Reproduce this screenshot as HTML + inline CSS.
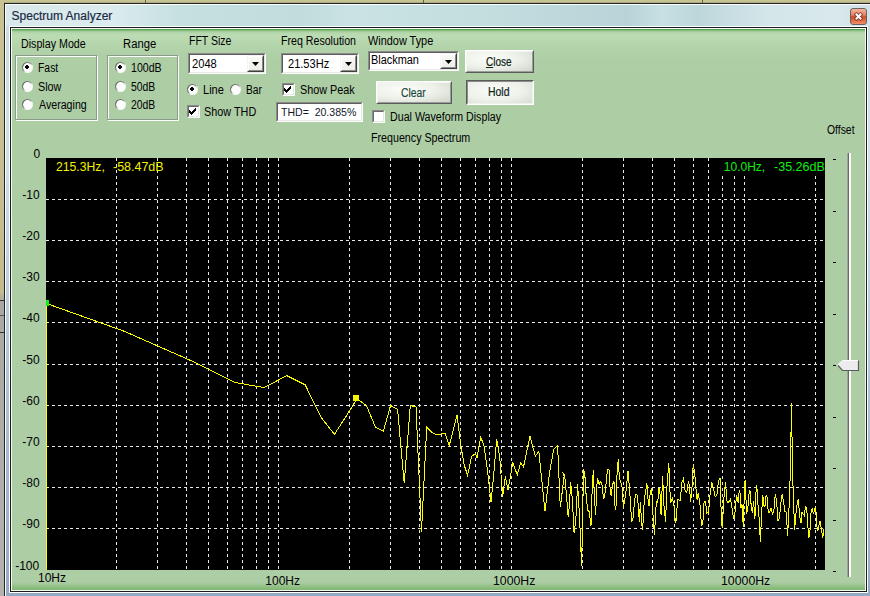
<!DOCTYPE html>
<html><head><meta charset="utf-8"><style>
html,body{margin:0;padding:0;}
body{width:870px;height:596px;overflow:hidden;position:relative;background:#c3bd92;font-family:"Liberation Sans",sans-serif;}
.t{position:absolute;white-space:pre;font-family:"Liberation Sans",sans-serif;font-size:12px;line-height:12px;}
</style></head><body>
<div style="position:absolute;left:0;top:0;width:870px;height:3px;background:linear-gradient(#c6c896,#c2c08e 60%,#a49e80)"></div>
<div style="position:absolute;left:0;top:0;width:4px;height:596px;background:linear-gradient(#c8c294,#c2bb8e 49%,#aaa8a6 50.5%,#b4b2ae 100%)"></div>
<div style="position:absolute;left:423px;top:0px;width:1px;height:3px;background:#5a6a40"></div>
<div style="position:absolute;left:145px;top:0px;width:1px;height:3px;background:#6a6a50"></div>
<div style="position:absolute;left:702px;top:0px;width:1px;height:3px;background:#6a6a50"></div>
<div style="position:absolute;left:0px;top:300px;width:4px;height:1px;background:#333"></div>
<div style="position:absolute;left:0px;top:315px;width:4px;height:1px;background:#555"></div>
<div style="position:absolute;left:0px;top:332px;width:4px;height:1px;background:#333"></div>
<div style="position:absolute;left:4px;top:3px;width:866px;height:593px;background:#262420"></div>
<div style="position:absolute;left:5px;top:4px;width:865px;height:592px;background:#fbfdfd"></div>
<div style="position:absolute;left:6px;top:5px;width:864px;height:591px;background:linear-gradient(#d2e4e8 0px,#c8dfe2 20px,#cfe0ea 150px,#b0c8dc 350px,#92aac4 591px)"></div>
<div style="position:absolute;left:6px;top:5px;width:864px;height:21px;background:linear-gradient(90deg,#d8e8ea 0%,#dcecee 12%,#c6e0e0 20%,#c0dcdc 34%,#cae2e4 40%,#c2dede 55%,#b8d4d8 72%,#c8e0e2 76%,#bcd6da 80%,#d4e6ea 88%,#d8e8ec 96%,#d0e2e6 100%)"></div>
<div style="position:absolute;left:850px;top:8px;width:17px;height:17px;box-sizing:border-box;border:1px solid #6c6060;border-radius:3px;background:linear-gradient(#f4b8a0,#e88060 40%,#d04a28 52%,#e06a40 75%,#f09070)"></div>
<svg style="position:absolute;left:850px;top:8px" width="17" height="17"><path d="M6.5,6.5 L10.5,10.5 M10.5,6.5 L6.5,10.5" stroke="#5a2a20" stroke-width="3.6" stroke-linecap="square" opacity="0.8"/><path d="M6.5,6.5 L10.5,10.5 M10.5,6.5 L6.5,10.5" stroke="#fff" stroke-width="2" stroke-linecap="square"/></svg>
<div style="position:absolute;left:9px;top:26px;width:859px;height:567px;background:#fdfefd"></div>
<div style="position:absolute;left:10px;top:27px;width:857px;height:565px;background:#1c1a1c"></div>
<div style="position:absolute;left:11px;top:28px;width:855px;height:563px;background:#f4faf2"></div>
<div style="position:absolute;left:12px;top:29px;width:853px;height:561px;background:linear-gradient(#3c9a3c 0px,#72b06a 1px,#9cc894 2px,#b6d8ae 4px,#bcdcb4 7px,#b4d4ac 16px,#aecfa6 30px,#adcda5 60px,#adcda5 553px,#a4c99a 555px,#94c288 557px,#86ba78 560px,#7eb470 561px)"></div>
<div style="position:absolute;left:16px;top:56px;width:82px;height:65px;border:1px solid #fbfdfb;box-sizing:border-box"></div>
<div style="position:absolute;left:15px;top:55px;width:82px;height:65px;border:1px solid #8e9a8c;box-sizing:border-box"></div>
<div style="position:absolute;left:108px;top:56px;width:71px;height:65px;border:1px solid #fbfdfb;box-sizing:border-box"></div>
<div style="position:absolute;left:107px;top:55px;width:71px;height:65px;border:1px solid #8e9a8c;box-sizing:border-box"></div>
<svg style="position:absolute;left:22px;top:62px" width="11" height="11" viewBox="0 0 11 11"><defs><linearGradient id="rg1" x1="0" y1="0" x2="1" y2="1"><stop offset="0" stop-color="#505050"/><stop offset="0.45" stop-color="#8a8a8a"/><stop offset="0.6" stop-color="#f4f6f2"/><stop offset="1" stop-color="#ffffff"/></linearGradient></defs><circle cx="5.5" cy="5.5" r="5.5" fill="url(#rg1)"/><circle cx="5.5" cy="5.5" r="4.4" fill="#fdfdfd"/><rect x="3" y="4" width="4" height="2" fill="#000" shape-rendering="crispEdges"/><rect x="4" y="3" width="2" height="4" fill="#000" shape-rendering="crispEdges"/></svg>
<svg style="position:absolute;left:22px;top:81px" width="11" height="11" viewBox="0 0 11 11"><defs><linearGradient id="rg2" x1="0" y1="0" x2="1" y2="1"><stop offset="0" stop-color="#505050"/><stop offset="0.45" stop-color="#8a8a8a"/><stop offset="0.6" stop-color="#f4f6f2"/><stop offset="1" stop-color="#ffffff"/></linearGradient></defs><circle cx="5.5" cy="5.5" r="5.5" fill="url(#rg2)"/><circle cx="5.5" cy="5.5" r="4.4" fill="#fdfdfd"/></svg>
<svg style="position:absolute;left:22px;top:99px" width="11" height="11" viewBox="0 0 11 11"><defs><linearGradient id="rg3" x1="0" y1="0" x2="1" y2="1"><stop offset="0" stop-color="#505050"/><stop offset="0.45" stop-color="#8a8a8a"/><stop offset="0.6" stop-color="#f4f6f2"/><stop offset="1" stop-color="#ffffff"/></linearGradient></defs><circle cx="5.5" cy="5.5" r="5.5" fill="url(#rg3)"/><circle cx="5.5" cy="5.5" r="4.4" fill="#fdfdfd"/></svg>
<svg style="position:absolute;left:115px;top:62px" width="11" height="11" viewBox="0 0 11 11"><defs><linearGradient id="rg4" x1="0" y1="0" x2="1" y2="1"><stop offset="0" stop-color="#505050"/><stop offset="0.45" stop-color="#8a8a8a"/><stop offset="0.6" stop-color="#f4f6f2"/><stop offset="1" stop-color="#ffffff"/></linearGradient></defs><circle cx="5.5" cy="5.5" r="5.5" fill="url(#rg4)"/><circle cx="5.5" cy="5.5" r="4.4" fill="#fdfdfd"/><rect x="3" y="4" width="4" height="2" fill="#000" shape-rendering="crispEdges"/><rect x="4" y="3" width="2" height="4" fill="#000" shape-rendering="crispEdges"/></svg>
<svg style="position:absolute;left:115px;top:81px" width="11" height="11" viewBox="0 0 11 11"><defs><linearGradient id="rg5" x1="0" y1="0" x2="1" y2="1"><stop offset="0" stop-color="#505050"/><stop offset="0.45" stop-color="#8a8a8a"/><stop offset="0.6" stop-color="#f4f6f2"/><stop offset="1" stop-color="#ffffff"/></linearGradient></defs><circle cx="5.5" cy="5.5" r="5.5" fill="url(#rg5)"/><circle cx="5.5" cy="5.5" r="4.4" fill="#fdfdfd"/></svg>
<svg style="position:absolute;left:115px;top:99px" width="11" height="11" viewBox="0 0 11 11"><defs><linearGradient id="rg6" x1="0" y1="0" x2="1" y2="1"><stop offset="0" stop-color="#505050"/><stop offset="0.45" stop-color="#8a8a8a"/><stop offset="0.6" stop-color="#f4f6f2"/><stop offset="1" stop-color="#ffffff"/></linearGradient></defs><circle cx="5.5" cy="5.5" r="5.5" fill="url(#rg6)"/><circle cx="5.5" cy="5.5" r="4.4" fill="#fdfdfd"/></svg>
<div style="position:absolute;left:188px;top:53px;width:78px;height:21px;box-sizing:border-box;border-style:solid;border-width:1px;border-color:#8a8a8a #fdfdfd #fdfdfd #8a8a8a;background:#fff"></div>
<div style="position:absolute;left:189px;top:54px;width:76px;height:19px;box-sizing:border-box;border-style:solid;border-width:1px;border-color:#5e5e5e #e8e8e4 #e8e8e4 #5e5e5e"></div>
<div style="position:absolute;left:247px;top:55px;width:17px;height:17px;box-sizing:border-box;border-style:solid;border-width:1px;border-color:#f4f4f4 #404040 #404040 #f4f4f4;background:linear-gradient(#fafaf8,#ecece8)"></div>
<div style="position:absolute;left:248px;top:56px;width:15px;height:15px;box-sizing:border-box;border-style:solid;border-width:1px;border-color:#ffffff #8a8a8a #8a8a8a #ffffff"></div>
<svg style="position:absolute;left:252px;top:62px" width="7" height="4"><path d="M0,0 H7 L3.5,4 Z" fill="#000"/></svg>
<div style="position:absolute;left:281px;top:53px;width:78px;height:21px;box-sizing:border-box;border-style:solid;border-width:1px;border-color:#8a8a8a #fdfdfd #fdfdfd #8a8a8a;background:#fff"></div>
<div style="position:absolute;left:282px;top:54px;width:76px;height:19px;box-sizing:border-box;border-style:solid;border-width:1px;border-color:#5e5e5e #e8e8e4 #e8e8e4 #5e5e5e"></div>
<div style="position:absolute;left:340px;top:55px;width:17px;height:17px;box-sizing:border-box;border-style:solid;border-width:1px;border-color:#f4f4f4 #404040 #404040 #f4f4f4;background:linear-gradient(#fafaf8,#ecece8)"></div>
<div style="position:absolute;left:341px;top:56px;width:15px;height:15px;box-sizing:border-box;border-style:solid;border-width:1px;border-color:#ffffff #8a8a8a #8a8a8a #ffffff"></div>
<svg style="position:absolute;left:345px;top:62px" width="7" height="4"><path d="M0,0 H7 L3.5,4 Z" fill="#000"/></svg>
<div style="position:absolute;left:368px;top:51px;width:91px;height:20px;box-sizing:border-box;border-style:solid;border-width:1px;border-color:#8a8a8a #fdfdfd #fdfdfd #8a8a8a;background:#fff"></div>
<div style="position:absolute;left:369px;top:52px;width:89px;height:18px;box-sizing:border-box;border-style:solid;border-width:1px;border-color:#5e5e5e #e8e8e4 #e8e8e4 #5e5e5e"></div>
<div style="position:absolute;left:440px;top:53px;width:17px;height:16px;box-sizing:border-box;border-style:solid;border-width:1px;border-color:#f4f4f4 #404040 #404040 #f4f4f4;background:linear-gradient(#fafaf8,#ecece8)"></div>
<div style="position:absolute;left:441px;top:54px;width:15px;height:14px;box-sizing:border-box;border-style:solid;border-width:1px;border-color:#ffffff #8a8a8a #8a8a8a #ffffff"></div>
<svg style="position:absolute;left:445px;top:60px" width="7" height="4"><path d="M0,0 H7 L3.5,4 Z" fill="#000"/></svg>
<svg style="position:absolute;left:187px;top:84px" width="11" height="11" viewBox="0 0 11 11"><defs><linearGradient id="rg7" x1="0" y1="0" x2="1" y2="1"><stop offset="0" stop-color="#505050"/><stop offset="0.45" stop-color="#8a8a8a"/><stop offset="0.6" stop-color="#f4f6f2"/><stop offset="1" stop-color="#ffffff"/></linearGradient></defs><circle cx="5.5" cy="5.5" r="5.5" fill="url(#rg7)"/><circle cx="5.5" cy="5.5" r="4.4" fill="#fdfdfd"/><rect x="3" y="4" width="4" height="2" fill="#000" shape-rendering="crispEdges"/><rect x="4" y="3" width="2" height="4" fill="#000" shape-rendering="crispEdges"/></svg>
<svg style="position:absolute;left:230px;top:84px" width="11" height="11" viewBox="0 0 11 11"><defs><linearGradient id="rg8" x1="0" y1="0" x2="1" y2="1"><stop offset="0" stop-color="#505050"/><stop offset="0.45" stop-color="#8a8a8a"/><stop offset="0.6" stop-color="#f4f6f2"/><stop offset="1" stop-color="#ffffff"/></linearGradient></defs><circle cx="5.5" cy="5.5" r="5.5" fill="url(#rg8)"/><circle cx="5.5" cy="5.5" r="4.4" fill="#fdfdfd"/></svg>
<div style="position:absolute;left:187px;top:105px;width:13px;height:13px;box-sizing:border-box;border-style:solid;border-width:1px;border-color:#8a8a8a #fafcfa #fafcfa #8a8a8a;background:#fff"><div style="position:absolute;left:0;top:0;right:0;bottom:0;border-style:solid;border-width:1px;border-color:#6a6a6a #e6e8e4 #e6e8e4 #6a6a6a"></div><svg style="position:absolute;left:0;top:0" width="11" height="11" viewBox="0 0 11 11" shape-rendering="crispEdges"><rect x="1" y="4" width="1" height="3" fill="#000"/><rect x="2" y="5" width="1" height="3" fill="#000"/><rect x="3" y="6" width="1" height="3" fill="#000"/><rect x="4" y="5" width="1" height="3" fill="#000"/><rect x="5" y="4" width="1" height="3" fill="#000"/><rect x="6" y="3" width="1" height="3" fill="#000"/><rect x="7" y="2" width="1" height="3" fill="#000"/></svg></div>
<div style="position:absolute;left:282px;top:83px;width:13px;height:13px;box-sizing:border-box;border-style:solid;border-width:1px;border-color:#8a8a8a #fafcfa #fafcfa #8a8a8a;background:#fff"><div style="position:absolute;left:0;top:0;right:0;bottom:0;border-style:solid;border-width:1px;border-color:#6a6a6a #e6e8e4 #e6e8e4 #6a6a6a"></div><svg style="position:absolute;left:0;top:0" width="11" height="11" viewBox="0 0 11 11" shape-rendering="crispEdges"><rect x="1" y="4" width="1" height="3" fill="#000"/><rect x="2" y="5" width="1" height="3" fill="#000"/><rect x="3" y="6" width="1" height="3" fill="#000"/><rect x="4" y="5" width="1" height="3" fill="#000"/><rect x="5" y="4" width="1" height="3" fill="#000"/><rect x="6" y="3" width="1" height="3" fill="#000"/><rect x="7" y="2" width="1" height="3" fill="#000"/></svg></div>
<div style="position:absolute;left:276px;top:102px;width:87px;height:20px;box-sizing:border-box;border-style:solid;border-width:1px;border-color:#8a8a8a #fdfdfd #fdfdfd #8a8a8a;background:#fff"></div>
<div style="position:absolute;left:277px;top:103px;width:85px;height:18px;box-sizing:border-box;border-style:solid;border-width:1px;border-color:#5e5e5e #e8e8e4 #e8e8e4 #5e5e5e"></div>
<div style="position:absolute;left:465px;top:50px;width:69px;height:23px;box-sizing:border-box;border-style:solid;border-width:1px;border-color:#ffffff #5a5a5a #5a5a5a #ffffff;background:radial-gradient(ellipse at 35% 35%,#fbfdf8 0%,#eef2ea 45%,#cfd4cb 100%)"></div>
<div style="position:absolute;left:466px;top:51px;width:67px;height:21px;box-sizing:border-box;border-style:solid;border-width:1px;border-color:#f4f6f2 #9a9e98 #9a9e98 #f4f6f2"></div>
<div style="position:absolute;left:376px;top:81px;width:76px;height:23px;box-sizing:border-box;border-style:solid;border-width:1px;border-color:#ffffff #5a5a5a #5a5a5a #ffffff;background:radial-gradient(ellipse at 35% 35%,#fbfdf8 0%,#eef2ea 45%,#cfd4cb 100%)"></div>
<div style="position:absolute;left:377px;top:82px;width:74px;height:21px;box-sizing:border-box;border-style:solid;border-width:1px;border-color:#f4f6f2 #9a9e98 #9a9e98 #f4f6f2"></div>
<div style="position:absolute;left:466px;top:80px;width:68px;height:25px;box-sizing:border-box;border-style:solid;border-width:1px;border-color:#5a5a5a #ffffff #ffffff #5a5a5a;background:radial-gradient(ellipse at 40% 40%,#fbfdf8 0%,#eef2ea 50%,#d6dbd2 100%)"></div>
<div style="position:absolute;left:467px;top:81px;width:66px;height:23px;box-sizing:border-box;border-style:solid;border-width:1px;border-color:#8a8e88 #eef0ec #eef0ec #8a8e88"></div>
<div style="position:absolute;left:372px;top:110px;width:13px;height:13px;box-sizing:border-box;border-style:solid;border-width:1px;border-color:#8a8a8a #fafcfa #fafcfa #8a8a8a;background:#fff"><div style="position:absolute;left:0;top:0;right:0;bottom:0;border-style:solid;border-width:1px;border-color:#6a6a6a #e6e8e4 #e6e8e4 #6a6a6a"></div><svg style="position:absolute;left:0;top:0" width="11" height="11" viewBox="0 0 11 11" shape-rendering="crispEdges"></svg></div>
<svg style="position:absolute;left:0;top:0" width="870" height="596" shape-rendering="crispEdges">
<rect x="46" y="158" width="779" height="412" fill="#000"/>
<g stroke="#e8e8e8" stroke-width="1" stroke-dasharray="3 3">
<line x1="116.5" y1="158" x2="116.5" y2="570"/>
<line x1="157.5" y1="158" x2="157.5" y2="570"/>
<line x1="186.5" y1="158" x2="186.5" y2="570"/>
<line x1="208.5" y1="158" x2="208.5" y2="570"/>
<line x1="227.5" y1="158" x2="227.5" y2="570"/>
<line x1="242.5" y1="158" x2="242.5" y2="570"/>
<line x1="256.5" y1="158" x2="256.5" y2="570"/>
<line x1="268.5" y1="158" x2="268.5" y2="570"/>
<line x1="278.5" y1="158" x2="278.5" y2="570"/>
<line x1="349.5" y1="158" x2="349.5" y2="570"/>
<line x1="390.5" y1="158" x2="390.5" y2="570"/>
<line x1="419.5" y1="158" x2="419.5" y2="570"/>
<line x1="441.5" y1="158" x2="441.5" y2="570"/>
<line x1="460.5" y1="158" x2="460.5" y2="570"/>
<line x1="475.5" y1="158" x2="475.5" y2="570"/>
<line x1="489.5" y1="158" x2="489.5" y2="570"/>
<line x1="501.5" y1="158" x2="501.5" y2="570"/>
<line x1="511.5" y1="158" x2="511.5" y2="570"/>
<line x1="582.5" y1="158" x2="582.5" y2="570"/>
<line x1="623.5" y1="158" x2="623.5" y2="570"/>
<line x1="652.5" y1="158" x2="652.5" y2="570"/>
<line x1="674.5" y1="158" x2="674.5" y2="570"/>
<line x1="693.5" y1="158" x2="693.5" y2="570"/>
<line x1="708.5" y1="158" x2="708.5" y2="570"/>
<line x1="722.5" y1="158" x2="722.5" y2="570"/>
<line x1="734.5" y1="158" x2="734.5" y2="570"/>
<line x1="744.5" y1="158" x2="744.5" y2="570"/>
<line x1="815.5" y1="158" x2="815.5" y2="570"/>
<line x1="46" y1="199.5" x2="825" y2="199.5"/>
<line x1="46" y1="240.5" x2="825" y2="240.5"/>
<line x1="46" y1="281.5" x2="825" y2="281.5"/>
<line x1="46" y1="322.5" x2="825" y2="322.5"/>
<line x1="46" y1="364.5" x2="825" y2="364.5"/>
<line x1="46" y1="405.5" x2="825" y2="405.5"/>
<line x1="46" y1="446.5" x2="825" y2="446.5"/>
<line x1="46" y1="487.5" x2="825" y2="487.5"/>
<line x1="46" y1="528.5" x2="825" y2="528.5"/>
</g>
<rect x="722" y="158" width="103" height="17" fill="#000"/>
<polyline points="46.0,570.0 46.0,303.3 123.6,331.0 194.1,362.0 235.1,382.5 264.2,387.6 286.8,375.6 305.2,384.8 320.8,417.0 334.4,434.3 346.3,416.0 356.9,398.9 366.5,405.5 375.3,427.0 383.4,431.0 390.6,405.5 397.6,409.5 404.2,483.4 410.3,405.5 416.0,406.8 421.5,531.7 426.7,427.0 431.6,432.0 436.3,435.0 440.8,434.0 445.1,433.7 449.2,445.8 453.2,430.0 457.0,414.9 460.7,445.0 464.2,465.0 467.6,475.3 471.7,456.0 475.7,453.7 477.0,457.7 480.6,437.6 483.8,444.3 487.8,472.5 491.0,502.0 493.2,480.5 496.7,439.0 499.9,459.0 502.6,496.6 505.3,476.5 508.0,490.0 512.8,463.0 517.3,475.0 520.6,463.0 523.5,467.0 530.0,436.0 535.3,456.4 538.8,451.0 545.0,511.4 549.6,472.5 553.6,449.7 557.6,445.6 560.3,507.4 564.3,475.0 562.8,472.3 565.2,479.3 568.2,516.9 569.4,506.0 570.6,481.6 572.4,500.1 574.1,533.3 575.9,518.2 577.6,484.0 579.6,518.3 581.6,566.2 582.5,524.5 583.5,468.7 584.9,475.8 586.3,498.0 587.8,510.1 589.3,512.0 591.0,526.0 592.1,490.9 593.3,470.0 594.5,500.0 595.7,514.5 596.7,487.5 597.6,478.0 599.0,484.4 600.4,481.6 601.9,484.0 603.4,498.0 604.6,496.7 605.8,486.3 607.5,469.3 609.3,470.0 610.2,491.0 611.2,495.7 612.6,484.4 614.0,481.6 615.0,505.6 615.9,509.8 617.0,474.8 618.2,459.3 619.4,478.4 620.6,481.6 622.0,486.9 623.4,507.5 625.7,494.2 628.0,471.0 629.8,492.2 631.6,521.5 633.1,518.1 634.6,500.4 636.0,493.7 637.5,495.7 639.3,521.5 640.4,502.0 641.5,521.3 642.6,530.4 643.9,506.4 645.2,493.3 646.9,483.5 648.0,499.1 649.1,506.4 650.4,490.9 651.7,489.0 653.2,518.5 654.6,534.8 655.7,509.3 656.7,502.0 657.8,502.1 658.9,487.9 660.0,493.7 661.1,515.2 662.6,475.9 664.0,505.8 665.5,521.7 667.1,484.3 668.8,462.8 669.8,489.1 670.9,502.0 672.5,498.5 674.2,506.4 675.3,522.9 676.4,519.5 677.5,499.7 678.6,499.9 680.2,500.2 681.9,482.4 683.5,478.5 685.1,491.1 686.8,492.1 688.4,481.3 689.5,486.3 690.6,502.0 691.9,489.2 693.2,464.9 694.6,472.5 696.0,489.0 697.1,499.7 698.2,493.3 699.9,503.2 701.5,526.0 702.8,523.1 704.1,502.0 705.5,501.2 706.9,513.0 708.5,512.9 710.2,493.3 711.9,482.1 713.5,489.0 715.1,496.3 716.8,495.5 718.5,481.5 720.1,478.0 721.2,512.6 722.2,528.3 723.9,498.5 725.5,482.4 727.1,502.1 728.8,502.0 730.5,498.9 732.1,508.6 733.7,519.3 735.1,511.8 736.5,495.4 738.3,502.7 739.2,490.3 740.1,493.5 741.0,507.7 742.0,504.6 743.3,526.7 744.2,497.6 745.1,479.7 746.6,513.8 748.0,506.3 749.4,489.8 750.3,492.1 751.2,506.4 752.4,513.4 753.6,500.9 754.9,519.3 755.8,493.7 756.8,485.2 757.7,502.4 758.6,510.1 760.4,541.5 761.6,513.0 762.8,495.4 763.9,505.5 765.0,506.4 766.0,496.5 766.9,495.4 768.3,512.5 769.7,512.0 771.0,507.8 772.4,513.8 773.8,511.5 775.2,494.4 776.6,501.1 778.0,521.2 779.4,518.0 780.7,504.6 782.1,494.4 783.5,500.9 784.9,511.2 786.3,512.0 787.6,536.0 789.4,500.9 790.9,451.0 791.2,403.6 791.8,403.6 792.1,451.0 792.7,476.9 794.6,530.4 796.5,506.8 798.3,499.0 799.6,515.7 801.0,523.0 802.0,511.9 802.9,513.8 804.2,515.4 805.6,506.4 806.5,507.2 807.5,519.3 808.6,537.5 809.7,536.0 810.9,513.3 812.1,508.3 813.5,514.1 814.9,508.3 815.8,507.3 816.7,524.9 817.7,531.1 818.6,526.7 820.0,521.3 821.3,528.6 822.7,537.7 824.1,528.6" fill="none" stroke="#fcfc00" stroke-width="1"/>
<rect x="46" y="300" width="3" height="6" fill="#10f010"/>
<rect x="353" y="395" width="6" height="6" fill="#f4f400"/>
</svg>
<div style="position:absolute;left:847px;top:153px;width:1px;height:424px;background:#9aa49a"></div>
<div style="position:absolute;left:848px;top:153px;width:1px;height:424px;background:#6a6a6a"></div>
<div style="position:absolute;left:849px;top:153px;width:2px;height:424px;background:#fcfcfc"></div>
<div style="position:absolute;left:833px;top:159px;width:3px;height:1px;background:#000"></div>
<div style="position:absolute;left:833px;top:211px;width:3px;height:1px;background:#000"></div>
<div style="position:absolute;left:833px;top:262px;width:3px;height:1px;background:#000"></div>
<div style="position:absolute;left:833px;top:314px;width:3px;height:1px;background:#000"></div>
<div style="position:absolute;left:833px;top:365px;width:3px;height:1px;background:#000"></div>
<div style="position:absolute;left:833px;top:417px;width:3px;height:1px;background:#000"></div>
<div style="position:absolute;left:833px;top:468px;width:3px;height:1px;background:#000"></div>
<div style="position:absolute;left:833px;top:520px;width:3px;height:1px;background:#000"></div>
<div style="position:absolute;left:833px;top:571px;width:3px;height:1px;background:#000"></div>
<svg style="position:absolute;left:830px;top:352px" width="36" height="26"><path d="M7.5,13 L12.5,8.5 H28.5 V18.5 H12.5 Z" fill="#ecebee"/><path d="M8,13.5 L12.5,18.5 H28.5 V8.5" fill="none" stroke="#5c5c5c" stroke-width="1.2"/><path d="M7.5,13 L12.5,8.5 H28" fill="none" stroke="#fdfdfd" stroke-width="1"/></svg>
<div class="t" style="left:11.60px;top:10px;color:#1a2a44;-webkit-text-stroke:0.2px #1a2a44;">Spectrum Analyzer</div>
<div class="t" style="left:21.11px;top:38px;color:#000;transform:scaleX(0.8901);transform-origin:0 0;">Display Mode</div>
<div class="t" style="left:122.56px;top:38px;color:#000;transform:scaleX(0.9382);transform-origin:0 0;">Range</div>
<div class="t" style="left:189.12px;top:35px;color:#000;transform:scaleX(0.8766);transform-origin:0 0;">FFT Size</div>
<div class="t" style="left:280.91px;top:35px;color:#000;transform:scaleX(0.8855);transform-origin:0 0;">Freq Resolution</div>
<div class="t" style="left:368.40px;top:35px;color:#000;transform:scaleX(0.9083);transform-origin:0 0;">Window Type</div>
<div class="t" style="left:38.13px;top:62px;color:#000;transform:scaleX(0.8682);transform-origin:0 0;">Fast</div>
<div class="t" style="left:38.10px;top:81px;color:#000;transform:scaleX(0.9000);transform-origin:0 0;">Slow</div>
<div class="t" style="left:39.00px;top:99px;color:#000;transform:scaleX(0.8868);transform-origin:0 0;">Averaging</div>
<div class="t" style="left:131.12px;top:62px;color:#000;transform:scaleX(0.8848);transform-origin:0 0;">100dB</div>
<div class="t" style="left:131.13px;top:81px;color:#000;transform:scaleX(0.8667);transform-origin:0 0;">50dB</div>
<div class="t" style="left:131.13px;top:99px;color:#000;transform:scaleX(0.8667);transform-origin:0 0;">20dB</div>
<div class="t" style="left:192.27px;top:58px;color:#000;transform:scaleX(0.9280);transform-origin:0 0;">2048</div>
<div class="t" style="left:288.08px;top:58px;color:#000;transform:scaleX(0.9209);transform-origin:0 0;">21.53Hz</div>
<div class="t" style="left:371.09px;top:54px;color:#000;transform:scaleX(0.9098);transform-origin:0 0;">Blackman</div>
<div class="t" style="left:202.58px;top:84px;color:#000;transform:scaleX(0.9190);transform-origin:0 0;">Line</div>
<div class="t" style="left:245.94px;top:84px;color:#000;transform:scaleX(0.8556);transform-origin:0 0;">Bar</div>
<div class="t" style="left:203.90px;top:106px;color:#000;transform:scaleX(0.9035);transform-origin:0 0;">Show THD</div>
<div class="t" style="left:299.90px;top:84px;color:#000;transform:scaleX(0.9000);transform-origin:0 0;">Show Peak</div>
<div class="t" style="left:280.90px;top:106px;color:#101828;font-size:11px;transform:scaleX(0.9577);transform-origin:0 0;">THD=  20.385%</div>
<div class="t" style="left:486.00px;top:56px;color:#0e2218;transform:scaleX(0.8333);transform-origin:0 0;-webkit-text-stroke:0.2px #0e2218;"><u>C</u>lose</div>
<div class="t" style="left:400.94px;top:87px;color:#18463a;transform:scaleX(0.8571);transform-origin:0 0;-webkit-text-stroke:0.15px #18463a;">Clear</div>
<div class="t" style="left:488.13px;top:86px;color:#0e2218;transform:scaleX(0.8696);transform-origin:0 0;-webkit-text-stroke:0.2px #0e2218;">Hold</div>
<div class="t" style="left:390.11px;top:111px;color:#000;transform:scaleX(0.8887);transform-origin:0 0;">Dual Waveform Display</div>
<div class="t" style="left:370.81px;top:132px;color:#000;transform:scaleX(0.8909);transform-origin:0 0;">Frequency Spectrum</div>
<div class="t" style="left:827.40px;top:124px;color:#000;transform:scaleX(0.8656);transform-origin:0 0;">Offset</div>
<div class="t" style="left:55.58px;top:161px;color:#f4f400;transform:scaleX(1.0174);transform-origin:0 0;">215.3Hz,</div>
<div class="t" style="left:113.20px;top:161px;color:#f4f400;transform:scaleX(1.0396);transform-origin:0 0;">-58.47dB</div>
<div class="t" style="left:723.80px;top:161px;color:#10f010;">10.0Hz,</div>
<div class="t" style="left:774.00px;top:161px;color:#10f010;transform:scaleX(1.0438);transform-origin:0 0;">-35.26dB</div>
<div class="t" style="left:33.40px;top:148px;color:#000;">0</div>
<div class="t" style="left:22.30px;top:189px;color:#000;">-10</div>
<div class="t" style="left:22.30px;top:230px;color:#000;">-20</div>
<div class="t" style="left:22.30px;top:271px;color:#000;">-30</div>
<div class="t" style="left:22.30px;top:312px;color:#000;">-40</div>
<div class="t" style="left:22.30px;top:354px;color:#000;">-50</div>
<div class="t" style="left:22.30px;top:395px;color:#000;">-60</div>
<div class="t" style="left:22.30px;top:436px;color:#000;">-70</div>
<div class="t" style="left:22.30px;top:477px;color:#000;">-80</div>
<div class="t" style="left:22.30px;top:518px;color:#000;">-90</div>
<div class="t" style="left:15.20px;top:560px;color:#000;">-100</div>
<div class="t" style="left:38.00px;top:572px;color:#000;">10Hz</div>
<div class="t" style="left:265.30px;top:575px;color:#000;">100Hz</div>
<div class="t" style="left:493.48px;top:575px;color:#000;transform:scaleX(1.0250);transform-origin:0 0;">1000Hz</div>
<div class="t" style="left:721.27px;top:575px;color:#000;transform:scaleX(1.0255);transform-origin:0 0;">10000Hz</div>
</body></html>
